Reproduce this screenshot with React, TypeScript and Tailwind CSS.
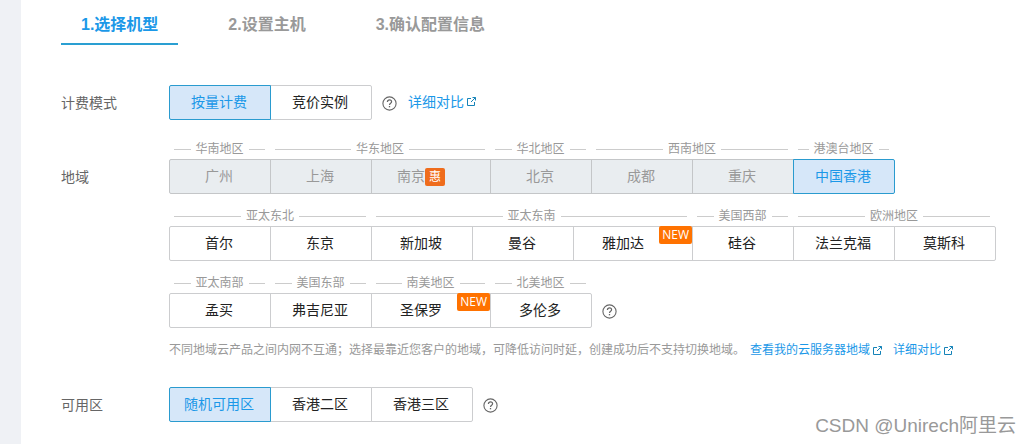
import { ReactNode, useState } from "react";
import clsx from "clsx";

type Option = { name: string; tag?: "sale" | "new"; disabled?: boolean };
type Group = { title: string; options: Option[] };

const steps = ["1.选择机型", "2.设置主机", "3.确认配置信息"];

const regionRows: Group[][] = [
  [
    { title: "华南地区", options: [{ name: "广州", disabled: true }] },
    {
      title: "华东地区",
      options: [
        { name: "上海", disabled: true },
        { name: "南京", tag: "sale", disabled: true },
      ],
    },
    { title: "华北地区", options: [{ name: "北京", disabled: true }] },
    {
      title: "西南地区",
      options: [
        { name: "成都", disabled: true },
        { name: "重庆", disabled: true },
      ],
    },
    { title: "港澳台地区", options: [{ name: "中国香港" }] },
  ],
  [
    { title: "亚太东北", options: [{ name: "首尔" }, { name: "东京" }] },
    {
      title: "亚太东南",
      options: [
        { name: "新加坡" },
        { name: "曼谷" },
        { name: "雅加达", tag: "new" },
      ],
    },
    { title: "美国西部", options: [{ name: "硅谷" }] },
    { title: "欧洲地区", options: [{ name: "法兰克福" }, { name: "莫斯科" }] },
  ],
  [
    { title: "亚太南部", options: [{ name: "孟买" }] },
    { title: "美国东部", options: [{ name: "弗吉尼亚" }] },
    { title: "南美地区", options: [{ name: "圣保罗", tag: "new" }] },
    { title: "北美地区", options: [{ name: "多伦多" }] },
  ],
];

export default function App() {
  const [step, setStep] = useState(0);
  const [billing, setBilling] = useState("按量计费");
  const [region, setRegion] = useState("中国香港");
  const [zone, setZone] = useState("随机可用区");

  return (
    <div className="relative flex min-h-screen bg-white font-['Liberation_Sans','Noto_Sans_CJK_SC',sans-serif] text-sm">
      <div className="w-[21px] shrink-0 bg-[#eff1f5]" />
      <main className="min-w-0 flex-1 pt-1 pb-5 pl-10">
        <nav className="flex gap-[30px]">
          {steps.map((s, i) => (
            <button
              key={s}
              onClick={() => setStep(i)}
              className={clsx(
                "h-[41px] border-b-2 px-5 pt-0.5 text-base font-bold whitespace-nowrap",
                i === step
                  ? "border-[#2a9fd2] text-[#1b98e8]"
                  : "border-transparent text-[#999]"
              )}
            >
              {s}
            </button>
          ))}
        </nav>

        <div className="mt-10 flex">
          <RowLabel>计费模式</RowLabel>
          <div className="flex items-center">
            <Options
              options={[{ name: "按量计费" }, { name: "竞价实例" }]}
              value={billing}
              onChange={setBilling}
              first
              last
            />
            <HelpButton />
            <ExternalLink className="ml-[11px] pb-0.5">详细对比</ExternalLink>
          </div>
        </div>

        <div className="mt-[19px] flex">
          <RowLabel className="mt-5">地域</RowLabel>
          <div>
            <div className="flex flex-col gap-3">
              {regionRows.map((row, i) => (
                <div key={i} className="flex items-end">
                  {row.map((group, j) => (
                    <div key={group.title} className={clsx(j > 0 && "-ml-px")}>
                      <GroupTitle>{group.title}</GroupTitle>
                      <Options
                        options={group.options}
                        value={region}
                        onChange={setRegion}
                        first={j === 0}
                        last={j === row.length - 1}
                      />
                    </div>
                  ))}
                  {i === regionRows.length - 1 && (
                    <div className="flex h-[35px] items-center">
                      <HelpButton />
                    </div>
                  )}
                </div>
              ))}
            </div>
            <p className="mt-3 flex h-5 items-center text-xs whitespace-nowrap text-[#999]">
              不同地域云产品之间内网不互通；选择最靠近您客户的地域，可降低访问时延，创建成功后不支持切换地域。
              <ExternalLink className="ml-[5px]">查看我的云服务器地域</ExternalLink>
              <ExternalLink className="ml-[11px]">详细对比</ExternalLink>
            </p>
          </div>
        </div>

        <div className="mt-[27px] flex">
          <RowLabel>可用区</RowLabel>
          <div className="flex items-center">
            <Options
              options={[
                { name: "随机可用区" },
                { name: "香港二区" },
                { name: "香港三区" },
              ]}
              value={zone}
              onChange={setZone}
              first
              last
            />
            <HelpButton />
          </div>
        </div>
      </main>
      <div className="absolute right-3.5 bottom-1 text-[19px] leading-7 text-[#999]">
        CSDN @Unirech阿里云
      </div>
    </div>
  );
}

function RowLabel({
  children,
  className,
}: {
  children: ReactNode;
  className?: string;
}) {
  return (
    <div className={clsx("h-[35px] w-[108px] shrink-0 leading-9 text-[#666]", className)}>
      {children}
    </div>
  );
}

function GroupTitle({ children }: { children: ReactNode }) {
  return (
    <div className="flex h-5 items-center gap-[5px] pr-1.5 pl-[5px] text-xs whitespace-nowrap text-[#999]">
      <span className="h-px flex-1 bg-[#ccc]" />
      {children}
      <span className="h-px flex-1 bg-[#ccc]" />
    </div>
  );
}

function Options({
  options,
  value,
  onChange,
  first,
  last,
}: {
  options: Option[];
  value: string;
  onChange: (name: string) => void;
  first?: boolean;
  last?: boolean;
}) {
  return (
    <div className="flex">
      {options.map((o, i) => {
        const selected = o.name === value;
        return (
          <button
            key={o.name}
            disabled={o.disabled}
            aria-pressed={selected}
            onClick={() => onChange(o.name)}
            className={clsx(
              "relative flex h-[35px] items-center justify-center border pb-0.5 whitespace-nowrap",
              i > 0 && "-ml-px",
              o.tag ? "w-[120px] pr-5" : "w-[102px] pr-0.5",
              first && i === 0 && "rounded-l-xs",
              last && i === options.length - 1 && "rounded-r-xs",
              selected
                ? "z-10 border-[#2a9bcf] bg-[#d6e7f9] text-[#1b98e8]"
                : o.disabled
                  ? "border-[#c4c6c8] bg-[#e9edf0] text-[#999]"
                  : "border-[#cccdcf] bg-white text-[#222]"
            )}
          >
            {o.name}
            {o.tag === "sale" && (
              <span className="mt-0.5 flex h-[18px] w-5 items-center justify-center rounded-xs bg-[#ef6c1c] text-xs text-white">
                惠
              </span>
            )}
            {o.tag === "new" && (
              <span className="absolute -top-px right-0 h-[18px] rounded-xs bg-[#ff7200] px-[3px] font-['Open_Sans',sans-serif] text-xs leading-[18px] text-white">
                NEW
              </span>
            )}
          </button>
        );
      })}
    </div>
  );
}

function HelpButton() {
  return (
    <button aria-label="帮助" className="mt-px ml-2.5 text-[#666]">
      <svg width="15" height="15" viewBox="0 0 15 15" fill="none" stroke="currentColor">
        <circle cx="7.5" cy="7.5" r="6.6" strokeWidth="1.1" />
        <path d="M5.4 5.9c0-1.3.9-2.1 2.1-2.1s2.1.8 2.1 1.9c0 1.4-2.1 1.6-2.1 3.2" strokeWidth="1.2" />
        <path d="M7.5 10v1.3" strokeWidth="1.3" />
      </svg>
    </button>
  );
}

function ExternalLink({
  children,
  className,
}: {
  children: ReactNode;
  className?: string;
}) {
  return (
    <a href="#" className={clsx("flex items-center gap-[3px] text-[#1b98e8]", className)}>
      {children}
      <svg width="9" height="9" viewBox="0 0 9 9" fill="none" stroke="#1583b8">
        <path d="M4 1.500H.5v7h7V5" />
        <path d="M5.500.5h3v3M8.500.5L4 5" />
      </svg>
    </a>
  );
}
